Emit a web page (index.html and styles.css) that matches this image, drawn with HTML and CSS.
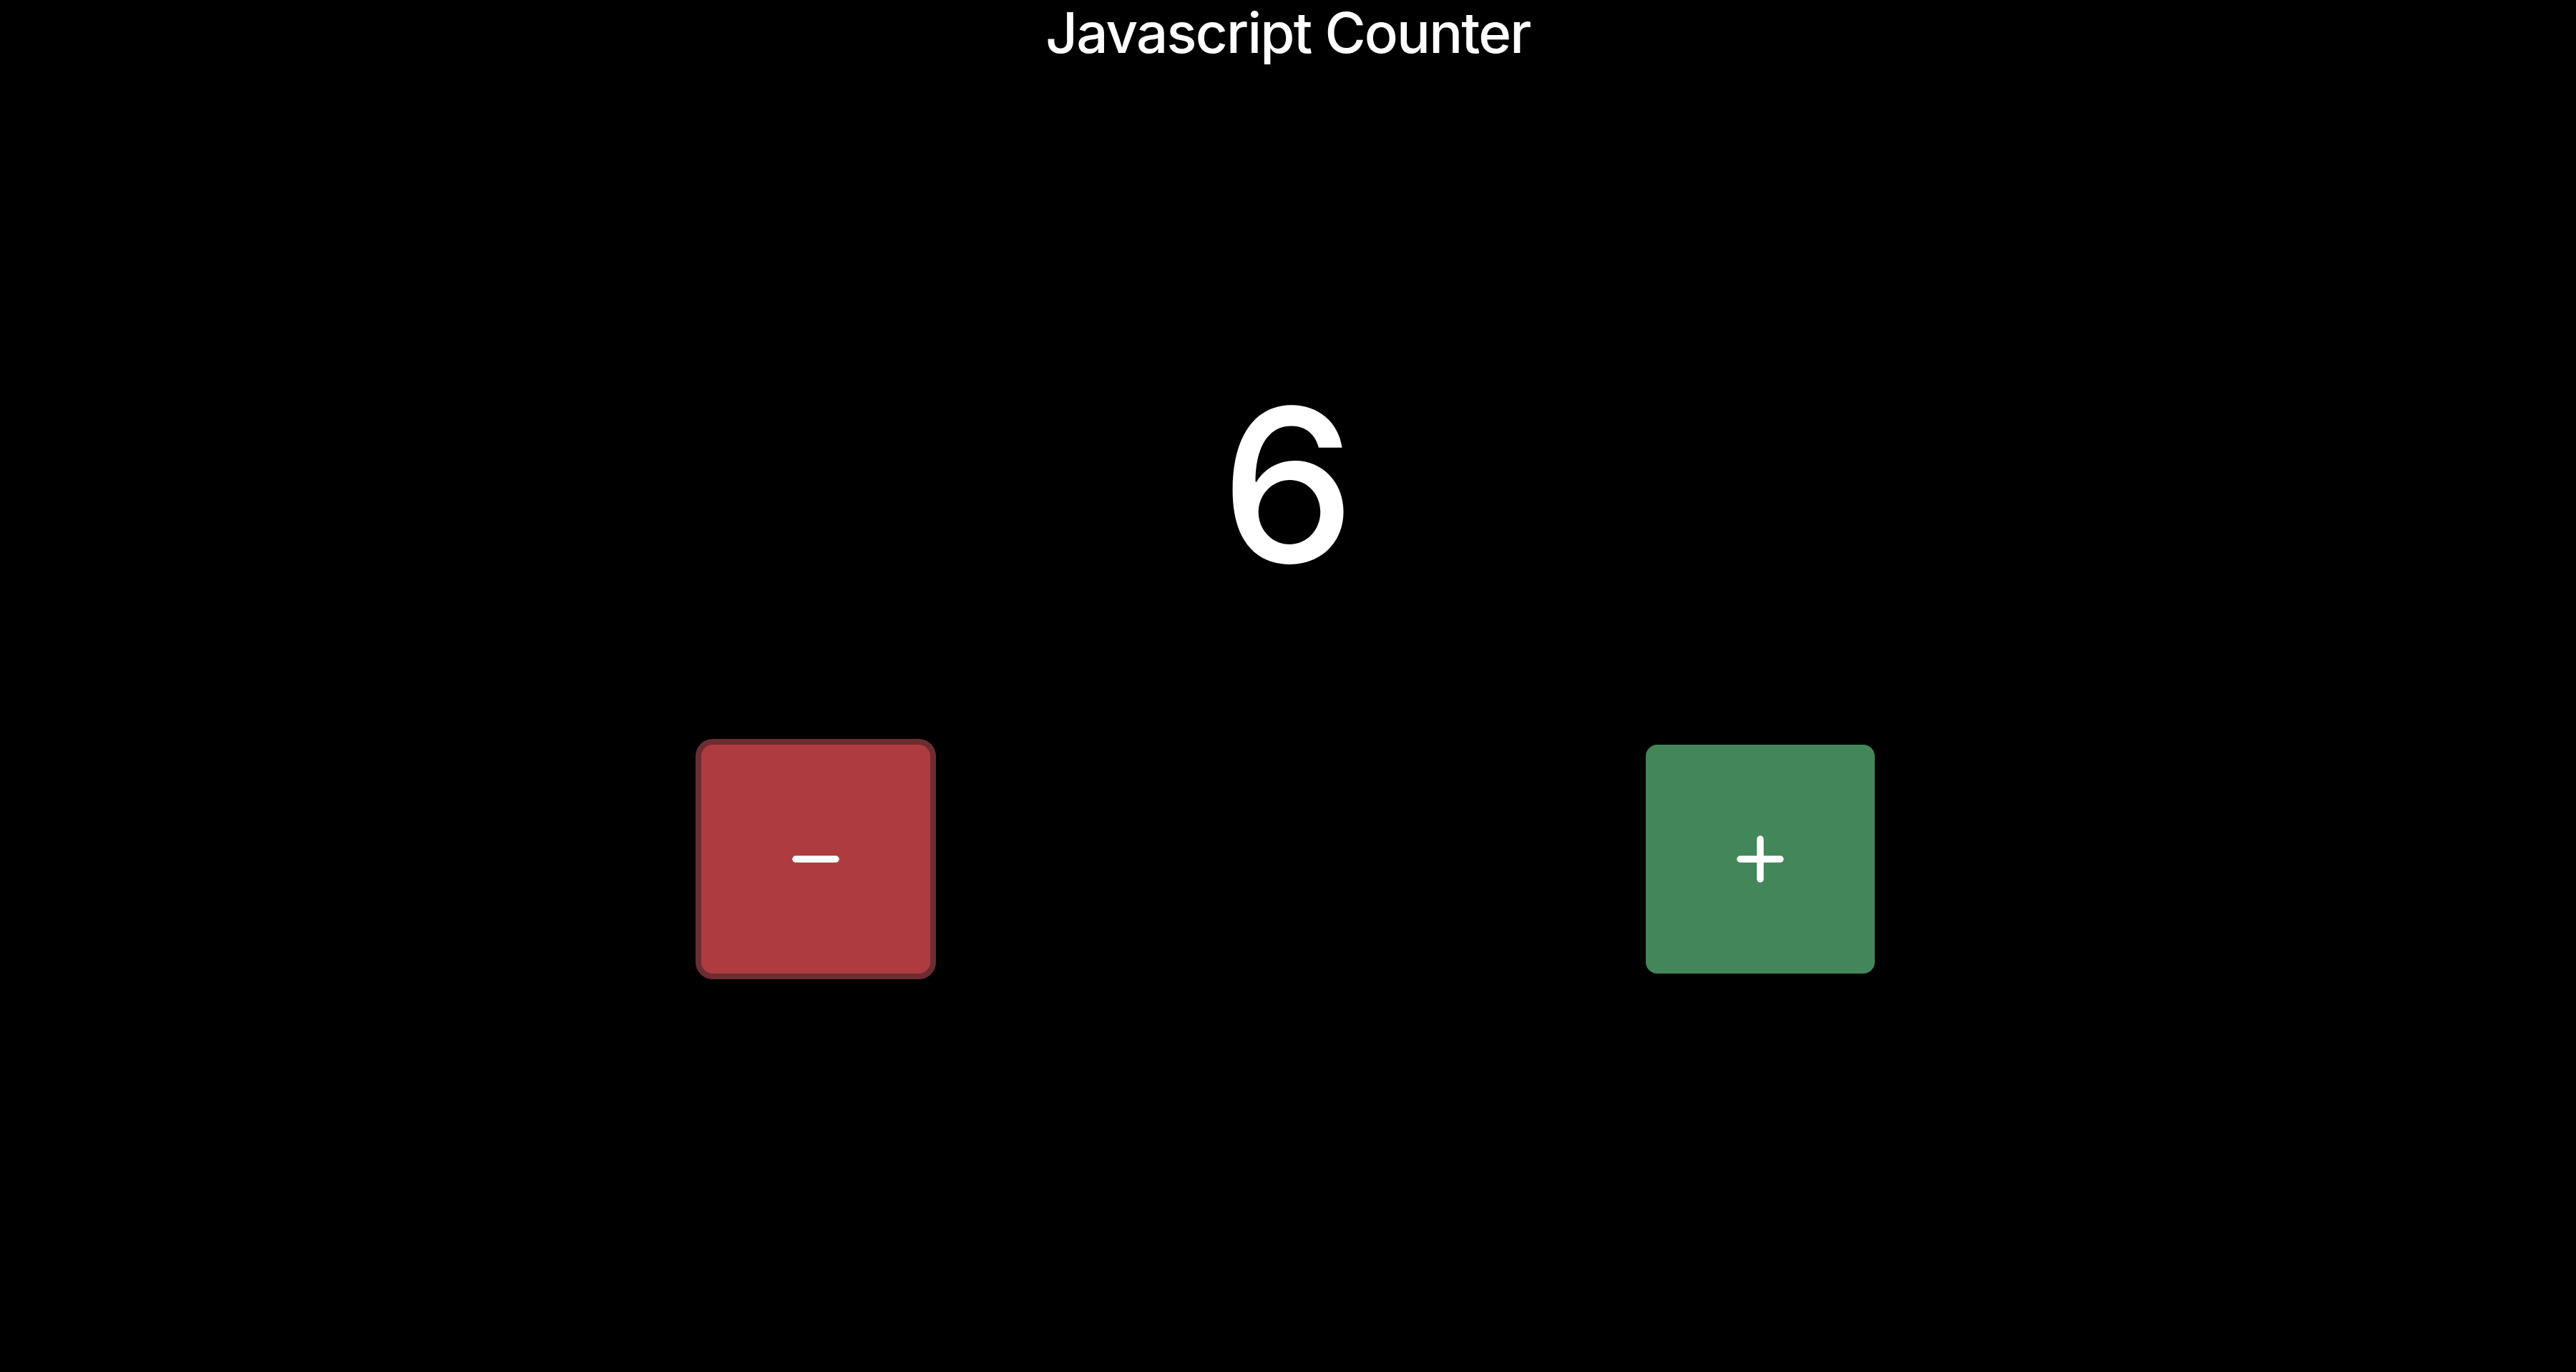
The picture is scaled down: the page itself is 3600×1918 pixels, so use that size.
FILE: index.html
```html
<!DOCTYPE html>
<html lang="en">
<head>
<meta charset="utf-8">
<title>Javascript Counter</title>
<link rel="stylesheet" href="styles.css">
</head>
<body>
<main class="app">
  <h1 class="title">Javascript Counter</h1>
  <div class="count">6</div>
  <div class="controls">
    <button class="btn btn-minus" aria-label="Decrement">
      <svg class="icon" viewBox="0 0 66 66" width="66" height="66"><line x1="5" y1="33" x2="61" y2="33"/></svg>
    </button>
    <button class="btn btn-plus" aria-label="Increment">
      <svg class="icon" viewBox="0 0 66 66" width="66" height="66"><line x1="5" y1="33" x2="61" y2="33"/><line x1="33" y1="5" x2="33" y2="61"/></svg>
    </button>
  </div>
</main>
</body>
</html>
```
FILE: styles.css
```css
html, body {
  margin: 0;
  padding: 0;
  background: #000;
}
body {
  font-family: Inter, "Noto Sans", "Liberation Sans", sans-serif;
  color: #fff;
  min-height: 100vh;
}
.app {
  display: flex;
  flex-direction: column;
  align-items: center;
}
.title {
  margin: 0;
  padding-top: 6px;
  font-size: 78px;
  line-height: 80px;
  font-weight: 500;
  letter-spacing: -1.8px;
}
.count {
  margin-top: 432px;
  font-size: 298px;
  line-height: 320px;
  font-weight: 500;
}
.controls {
  margin-top: 203px;
  display: flex;
  gap: 1000px;
}
.btn {
  width: 320px;
  height: 320px;
  border: none;
  border-radius: 16px;
  padding: 0;
  display: flex;
  align-items: center;
  justify-content: center;
  cursor: pointer;
}
.btn-minus {
  background: #ae3b40;
  box-shadow: 0 0 0 8px #6c2d31;
}
.btn-plus {
  background: #428659;
}
.icon {
  stroke: #fff;
  stroke-width: 9.5;
  stroke-linecap: round;
  fill: none;
}
```
